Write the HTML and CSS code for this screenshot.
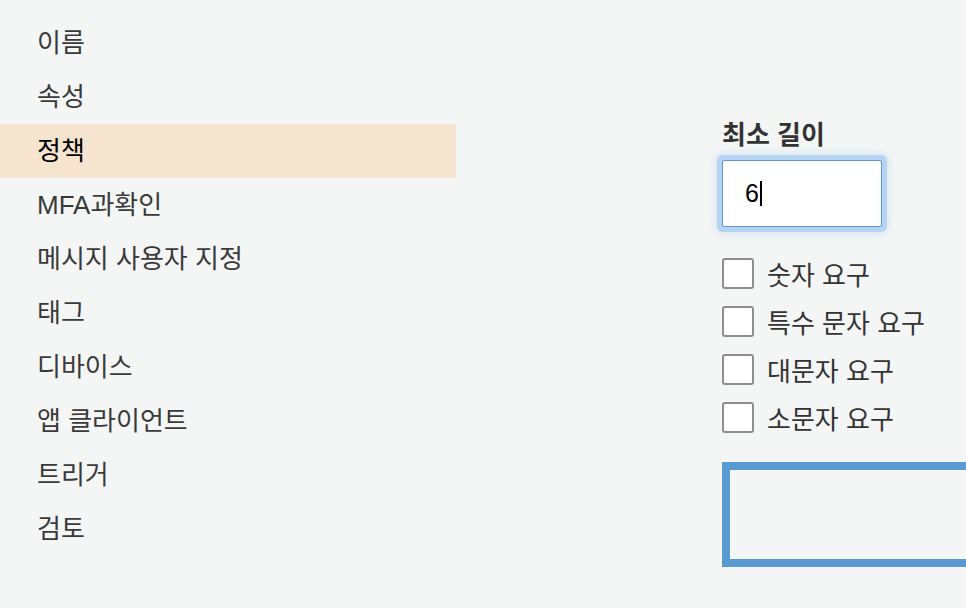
FILE: index.html
```html
<!DOCTYPE html>
<html lang="ko">
<head>
<meta charset="utf-8">
<link rel="stylesheet" href="styles.css">
</head>
<body>
<div class="page">
  <nav class="nav">
    <div class="nav-item">이름</div>
    <div class="nav-item">속성</div>
    <div class="nav-item active">정책</div>
    <div class="nav-item">MFA과확인</div>
    <div class="nav-item">메시지 사용자 지정</div>
    <div class="nav-item">태그</div>
    <div class="nav-item">디바이스</div>
    <div class="nav-item">앱 클라이언트</div>
    <div class="nav-item">트리거</div>
    <div class="nav-item">검토</div>
  </nav>
  <main class="main">
    <div class="label">최소 길이</div>
    <div class="input-wrap"><div class="input">6<span class="caret"></span></div></div>
    <ul class="checks">
      <li class="check"><span class="box"></span><span>숫자 요구</span></li>
      <li class="check"><span class="box"></span><span>특수 문자 요구</span></li>
      <li class="check"><span class="box"></span><span>대문자 요구</span></li>
      <li class="check"><span class="box"></span><span>소문자 요구</span></li>
    </ul>
    <div class="panel"></div>
  </main>
</div>
</body>
</html>
```
FILE: styles.css
```css
html, body {
  margin: 0;
  padding: 0;
  background: #f4f6f6;
  height: 100%;
  overflow: hidden;
}
body {
  font-family: "Liberation Sans", "Noto Sans CJK KR", sans-serif;
  color: #333;
}
.page {
  display: flex;
  width: 1100px;
}
.nav {
  width: 456px;
  flex: none;
  padding-top: 16px;
}
.nav-item {
  box-sizing: border-box;
  height: 54px;
  display: flex;
  align-items: center;
  padding-left: 37px;
  padding-bottom: 6px;
  font-size: 26px;
  color: #3a3a3a;
}
.nav-item.active {
  background: #f4e4d0;
  color: #000;
}
.main {
  margin-left: 266px;
  padding-top: 117px;
  flex: 1;
}
.label {
  font-size: 26px;
  font-weight: bold;
  line-height: 36px;
  color: #333;
  height: 36px;
}
.input-wrap {
  margin-top: 7px;
}
.input {
  box-sizing: border-box;
  width: 160px;
  height: 67px;
  border: 1px solid #5b9ad4;
  background: #fff;
  box-shadow: 0 0 0 5px #b5d4f4, 0 0 8px 6px rgba(150, 190, 230, 0.35);
  border-radius: 2px;
  display: flex;
  align-items: center;
  padding-left: 22px;
  font-size: 25px;
  color: #000;
}
.caret {
  display: inline-block;
  width: 2px;
  height: 25px;
  background: #000;
  margin-left: 1px;
}
.checks {
  list-style: none;
  margin: 31px 0 0;
  padding: 0;
  display: flex;
  flex-direction: column;
  gap: 17px;
}
.check {
  display: flex;
  align-items: center;
  gap: 13px;
  height: 31px;
  font-size: 26px;
  color: #333;
}
.box {
  box-sizing: border-box;
  width: 32px;
  height: 31px;
  border: 2px solid #8e8e8e;
  border-radius: 3px;
  background: #fff;
  flex: none;
}
.panel {
  margin-top: 29px;
  box-sizing: border-box;
  width: 400px;
  height: 105px;
  border: 8px solid #5a9ad3;
}
```
